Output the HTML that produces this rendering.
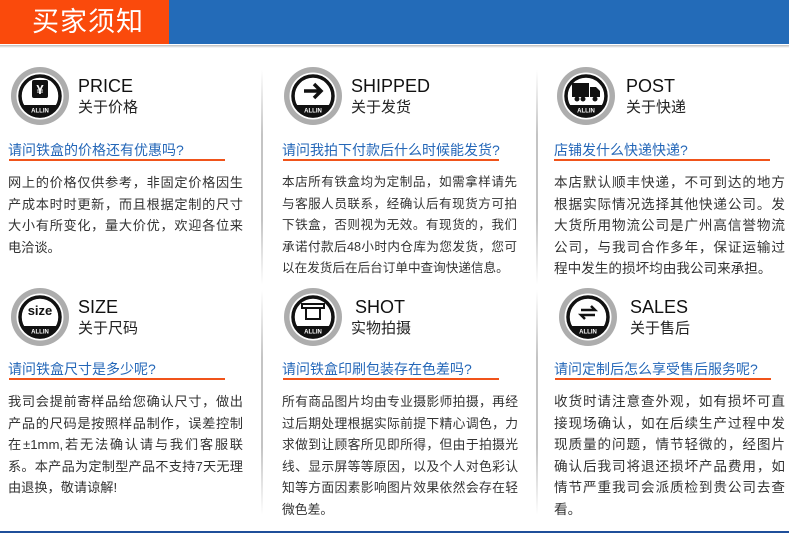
<!DOCTYPE html>
<html><head><meta charset="utf-8"><style>
*{margin:0;padding:0;box-sizing:border-box}
body{width:789px;height:537px;background:#fff;position:relative;overflow:hidden;font-family:"Liberation Sans","Noto Sans CJK SC",sans-serif;color:#222}
.a{position:absolute}
.hd1{left:0;top:0;width:169px;height:44px;background:#fa4a0c}
.hd2{left:169px;top:0;width:620px;height:44px;background:#236bb8}
.ht{left:32px;top:5px;color:#fff;font-size:27px;line-height:34px;letter-spacing:1px}
.sh{left:0;top:45px;width:789px;height:3px;background:linear-gradient(#bbb,#fff)}
.vd{width:2px;background:linear-gradient(to bottom,rgba(200,200,200,0),#c4c4c4 30%,#c4c4c4 70%,rgba(200,200,200,0))}
.t1{font-size:18px;line-height:20px;color:#111}
.t2{font-size:15px;line-height:20px;color:#222}
.q{font-size:14px;line-height:18px;color:#2467b8;white-space:nowrap}
.ul{height:1.5px;background:#f0531a}
.b{color:#333;line-height:21.6px}
.b div{text-align:justify;text-align-last:justify;white-space:nowrap}
.b div.l{text-align-last:left}
.bot{left:0;top:531px;width:789px;height:2px;background:#1f4f9a}
</style></head><body>
<div class="a hd1"></div><div class="a hd2"></div>
<div class="a ht">买家须知</div>
<div class="a sh"></div>
<div class="a vd" style="left:261px;top:70px;height:215px"></div>
<div class="a vd" style="left:536px;top:70px;height:215px"></div>
<div class="a vd" style="left:261px;top:290px;height:225px"></div>
<div class="a vd" style="left:536px;top:290px;height:225px"></div>

<svg width="0" height="0" style="position:absolute"><defs>
<g id="ic">
<circle cx="0" cy="0" r="29" fill="#adadad"/>
<circle cx="0" cy="0" r="23.5" fill="#fff"/>
<circle cx="0" cy="0" r="20" fill="none" stroke="#111" stroke-width="3.5"/>
<path d="M-19,9 A20.5,20.5 0 0 0 19,9 Z" fill="#111"/>
<text x="0" y="16.5" font-size="6" font-family="Liberation Sans" font-weight="bold" fill="#fff" text-anchor="middle">ALLIN</text>
</g></defs></svg>

<svg class="a" style="left:0;top:56px" width="80" height="80"><use href="#ic" x="40" y="40"/><rect x="32" y="24" width="16" height="18" rx="2" fill="#111"/><text x="40" y="38" font-size="13" font-weight="bold" fill="#fff" text-anchor="middle" font-family="Liberation Sans">¥</text></svg>
<svg class="a" style="left:273px;top:56px" width="80" height="80"><use href="#ic" x="40" y="40"/><path d="M31,35 H47 M41,28 L48,35 L41,42" stroke="#111" stroke-width="3.5" fill="none"/></svg>
<svg class="a" style="left:546px;top:56px" width="80" height="80"><use href="#ic" x="40" y="40"/><rect x="26" y="27" width="17" height="14" fill="#111"/><path d="M44,31 H50 L54,35 V41 H44 Z" fill="#111"/><circle cx="31" cy="43" r="2.5" fill="#111"/><circle cx="37" cy="43" r="2.5" fill="#111"/><circle cx="49" cy="43" r="2.5" fill="#111"/></svg>
<svg class="a" style="left:0;top:277px" width="80" height="80"><use href="#ic" x="40" y="40"/><text x="40" y="38" font-size="13" font-weight="bold" fill="#111" text-anchor="middle" font-family="Liberation Sans">size</text></svg>
<svg class="a" style="left:273px;top:277px" width="80" height="80"><use href="#ic" x="40" y="40"/><path d="M29,27 H51 V31 H29 Z M33,31 V42 H47 V31" stroke="#111" stroke-width="2" fill="none"/></svg>
<svg class="a" style="left:548px;top:277px" width="80" height="80"><use href="#ic" x="40" y="40"/><path d="M33,33 H47 L43,29 M47,38 H33 L37,42" stroke="#111" stroke-width="2.5" fill="none"/></svg>

<div class="a t1" style="left:78px;top:76px">PRICE</div><div class="a t2" style="left:78px;top:98px">关于价格</div>
<div class="a t1" style="left:351px;top:76px">SHIPPED</div><div class="a t2" style="left:351px;top:98px">关于发货</div>
<div class="a t1" style="left:626px;top:76px">POST</div><div class="a t2" style="left:626px;top:98px">关于快递</div>
<div class="a t1" style="left:78px;top:297px">SIZE</div><div class="a t2" style="left:78px;top:319px">关于尺码</div>
<div class="a t1" style="left:355px;top:297px">SHOT</div><div class="a t2" style="left:351px;top:319px">实物拍摄</div>
<div class="a t1" style="left:630px;top:297px">SALES</div><div class="a t2" style="left:630px;top:319px">关于售后</div>

<div class="a q" style="left:8px;top:141px">请问铁盒的价格还有优惠吗?</div><div class="a ul" style="left:9px;top:159px;width:216px"></div>
<div class="a q" style="left:282px;top:141px">请问我拍下付款后什么时候能发货?</div><div class="a ul" style="left:283px;top:159px;width:216px"></div>
<div class="a q" style="left:554px;top:141px">店铺发什么快递快递?</div><div class="a ul" style="left:554px;top:159px;width:216px"></div>
<div class="a q" style="left:8px;top:360px">请问铁盒尺寸是多少呢?</div><div class="a ul" style="left:9px;top:378px;width:216px"></div>
<div class="a q" style="left:282px;top:360px">请问铁盒印刷包装存在色差吗?</div><div class="a ul" style="left:283px;top:378px;width:216px"></div>
<div class="a q" style="left:554px;top:360px">请问定制后怎么享受售后服务呢?</div><div class="a ul" style="left:555px;top:378px;width:216px"></div>

<div class="a b" style="left:8px;top:172px;width:235px;font-size:13.2px">
<div>网上的价格仅供参考，非固定价格因生</div><div>产成本时时更新，而且根据定制的尺寸</div><div>大小有所变化，量大价优，欢迎各位来</div><div class="l">电洽谈。</div></div>
<div class="a b" style="left:282px;top:172px;width:235px;font-size:12.6px">
<div>本店所有铁盒均为定制品，如需拿样请先</div><div>与客服人员联系，经确认后有现货方可拍</div><div>下铁盒，否则视为无效。有现货的，我们</div><div>承诺付款后48小时内仓库为您发货，您可</div><div class="l">以在发货后在后台订单中查询快递信息。</div></div>
<div class="a b" style="left:554px;top:172px;width:231px;font-size:13.6px">
<div>本店默认顺丰快递，不可到达的地方</div><div>根据实际情况选择其他快递公司。发</div><div>大货所用物流公司是广州高信誉物流</div><div>公司，与我司合作多年，保证运输过</div><div class="l">程中发生的损坏均由我公司来承担。</div></div>

<div class="a b" style="left:8px;top:391px;width:235px;font-size:13.2px">
<div>我司会提前寄样品给您确认尺寸，做出</div><div>产品的尺码是按照样品制作，误差控制</div><div>在±1mm,若无法确认请与我们客服联</div><div>系。本产品为定制型产品不支持7天无理</div><div class="l">由退换，敬请谅解!</div></div>
<div class="a b" style="left:282px;top:391px;width:236px;font-size:12.8px">
<div>所有商品图片均由专业摄影师拍摄，再经</div><div>过后期处理根据实际前提下精心调色，力</div><div>求做到让顾客所见即所得，但由于拍摄光</div><div>线、显示屏等等原因，以及个人对色彩认</div><div>知等方面因素影响图片效果依然会存在轻</div><div class="l">微色差。</div></div>
<div class="a b" style="left:554px;top:391px;width:231px;font-size:13.6px">
<div>收货时请注意查外观，如有损坏可直</div><div>接现场确认，如在后续生产过程中发</div><div>现质量的问题，情节轻微的，经图片</div><div>确认后我司将退还损坏产品费用，如</div><div>情节严重我司会派质检到贵公司去查</div><div class="l">看。</div></div>

<div class="a bot"></div>
</body></html>
